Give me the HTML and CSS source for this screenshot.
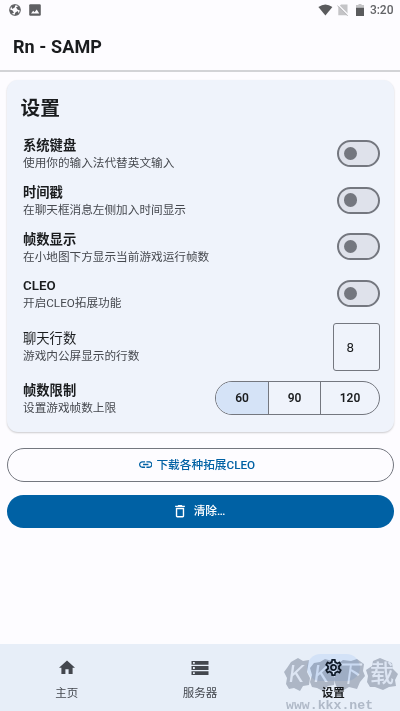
FILE: index.html
```html
<!DOCTYPE html>
<html lang="zh-CN">
<head>
<meta charset="utf-8">
<title>Rn - SAMP</title>
<link rel="stylesheet" href="styles.css">
</head>
<body>
<div class="screen">
  <div class="status">
    <svg class="s-app" viewBox="0 0 12 12"><circle cx="6" cy="6" r="5.300" fill="none" stroke="#77787b" stroke-width="1.200"/><g fill="#5f6063"><path d="M2 1.800 6.500.4 5.800 3.300 3.300 5z"/><path d="M10.200 2 11.600 6.500 8.700 5.800 7 3.300z"/><path d="M10 10.200 5.500 11.600 6.200 8.700 8.700 7z"/><path d="M1.800 10 .4 5.500 3.300 6.200 5 8.700z"/></g></svg>
    <svg class="s-img" viewBox="0 0 12 12"><rect x=".2" y=".2" width="11.600" height="11.600" rx="1.200" fill="#5f6063"/><path d="M2 9.500 4.200 6.700 5.600 8.300 7.700 5.600 10.300 9.500z" fill="#fdfcff"/></svg>
    <span class="grow"></span>
    <svg class="s-wifi" viewBox="0 0 15 12"><path d="M.4 3Q7.300-2 14.400 3L7.400 11.600z" fill="#5a5b5d"/></svg>
    <svg class="s-sim" viewBox="0 0 12 12"><path d="M4 .6H10.500V11.300H1.300V3.300z" fill="#c4c4c7"/><path d="M.8.400 12 11.600" stroke="#fdfcff" stroke-width="1.200"/><path d="M.3 1.500 10.700 11.900" stroke="#b8b8bb" stroke-width="1"/></svg>
    <svg class="s-bat" viewBox="0 0 8 12"><path d="M2.500 0h3v1H8v4H0V1h2.500z" fill="#c4c4c6"/><path d="M0 3.800h8V12H0z" fill="#5a5b5d"/></svg>
    <span class="clock">3:20</span>
  </div>
  <header class="appbar">Rn - SAMP</header>

  <main class="content">
    <section class="card">
      <h2 class="heading">设置</h2>
      <div class="row"><div><div class="name">系统键盘</div><div class="desc">使用你的输入法代替英文输入</div></div><div class="switch"></div></div>
      <div class="row"><div><div class="name">时间戳</div><div class="desc">在聊天框消息左侧加入时间显示</div></div><div class="switch"></div></div>
      <div class="row"><div><div class="name">帧数显示</div><div class="desc">在小地图下方显示当前游戏运行帧数</div></div><div class="switch"></div></div>
      <div class="row"><div><div class="name latin">CLEO</div><div class="desc">开启CLEO拓展功能</div></div><div class="switch"></div></div>
      <div class="row row-lines"><div><div class="name regular">聊天行数</div><div class="desc">游戏内公屏显示的行数</div></div><div class="field">8</div></div>
      <div class="row row-limit"><div><div class="name">帧数限制</div><div class="desc">设置游戏帧数上限</div></div>
        <div class="segments"><span class="seg on">60</span><span class="seg">90</span><span class="seg last">120</span></div>
      </div>
    </section>

    <div class="btn outlined">
      <svg class="i-link" viewBox="2 7 20 10"><path fill="#0061a4" d="M3.900 12c0-1.710 1.390-3.100 3.100-3.100h4V7H7c-2.760 0-5 2.240-5 5s2.240 5 5 5h4v-1.900H7c-1.710 0-3.100-1.390-3.100-3.100zM8 13h8v-2H8v2zm9-6h-4v1.900h4c1.710 0 3.100 1.390 3.100 3.100s-1.390 3.100-3.100 3.100h-4V17h4c2.760 0 5-2.240 5-5s-2.240-5-5-5z"/></svg>
      <span>下载各种拓展CLEO</span>
    </div>
    <div class="btn filled">
      <svg class="i-trash" viewBox="5 3 14 18"><path fill="#fff" d="M6 19c0 1.100.9 2 2 2h8c1.100 0 2-.9 2-2V7H6v12zM8 9h8v10H8V9zm7.500-5l-1-1h-5l-1 1H5v2h14V4h-3.500z"/></svg>
      <span>清除…</span>
    </div>
  </main>

  <nav class="tabs">
    <div class="tab"><div class="pill"><svg class="i-home" viewBox="2 3 20 17"><path fill="#43474e" d="M10 20v-6h4v6h5v-8h3L12 3 2 12h3v8z"/></svg></div><span>主页</span></div>
    <div class="tab"><div class="pill"><svg class="i-dns" viewBox="0 0 18 14"><path fill="#43474e" fill-rule="evenodd" d="M.5 0h17v3.800H.5zM2 1h1.800v1.800H2zM.5 5.100h17v3.800H.5zM2 6.100h1.800v1.800H2zM.5 10.200h17V14H.5zM2 11.200h1.800V13H2z"/></svg></div><span>服务器</span></div>
    <div class="tab active"><div class="pill"><svg class="i-gear" viewBox="2 2 20 20"><path fill="#101c2b" d="M19.430 12.980c.04-.32.070-.64.070-.98 0-.34-.03-.66-.07-.98l2.110-1.650c.19-.15.24-.42.12-.64l-2-3.460c-.09-.16-.26-.25-.44-.25-.06 0-.12.010-.17.030l-2.490 1c-.52-.4-1.080-.73-1.690-.98l-.38-2.650C14.460 2.180 14.250 2 14 2h-4c-.25 0-.46.18-.49.420l-.38 2.650c-.61.250-1.170.590-1.690.980l-2.490-1c-.06-.02-.12-.03-.18-.03-.17 0-.34.090-.43.250l-2 3.460c-.13.220-.07.490.12.640l2.110 1.650c-.04.320-.07.650-.07.980s.03.660.070.980l-2.110 1.650c-.19.150-.24.420-.12.640l2 3.460c.09.160.26.250.44.250.06 0 .12-.01.170-.03l2.490-1c.52.400 1.080.730 1.690.980l.38 2.650c.03.240.24.420.49.420h4c.25 0 .46-.18.490-.42l.38-2.650c.61-.25 1.170-.59 1.690-.98l2.490 1c.06.020.12.030.18.030.17 0 .34-.09.430-.25l2-3.460c.12-.22.070-.49-.12-.64l-2.110-1.650zm-1.980-1.710c.04.310.050.520.050.730s-.02.430-.05.730l-.14 1.130.89.700 1.080.84-.7 1.210-1.270-.51-1.040-.42-.9.680c-.43.320-.84.560-1.250.730l-1.060.43-.16 1.130-.2 1.350h-1.400l-.35-2.480-1.060-.43c-.43-.18-.83-.41-1.230-.71l-.91-.7-1.060.43-1.270.51-.7-1.210 1.970-1.540-.14-1.130c-.03-.31-.05-.54-.05-.74s.02-.43.050-.73l.14-1.130-1.970-1.540.7-1.210 1.270.51 1.040.42.900-.68c.43-.32.840-.56 1.250-.73l1.060-.43.350-2.480h1.390l.35 2.480 1.060.43c.43.180.83.410 1.230.71l.91.700 1.060-.43 1.270-.51.700 1.210-1.960 1.540.14 1.130zM12 8c-2.210 0-4 1.790-4 4s1.790 4 4 4 4-1.790 4-4-1.790-4-4-4zm0 6c-1.100 0-2-.9-2-2s.9-2 2-2 2 .9 2 2-.9 2-2 2z"/></svg></div><span>设置</span></div>
  </nav>

  <div class="mark">
    <svg class="mark-bg" viewBox="0 0 116 34"><g fill="#bfc3cb"><path d="M1 15 4 11 8 5 15 1 20 4 26 3 25 9 24 15 27 21 26 28 20 29 17 34 11 31 6 32 3 27 4 21z"/><path d="M27 11 31 6 37 5 42 2 49 4 51 10 49 15 52 21 51 28 45 29 40 34 34 31 29 30 27 25 29 18z"/><path d="M53 8 60 3 68 4 74 2 81 7 80 14 82 19 77 25 74 32 66 30 59 34 53 29 51 22 54 15z"/><path d="M83 13 89 9 90 4 97 1 104 4 109 6 110 12 115 17 112 23 113 29 106 30 100 33 92 30 87 30 84 25 85 19z"/></g></svg>
    <div class="mark-name"><span>K</span><span>K</span><span>下</span><span>载</span></div>
    <div class="mark-url">www.kkx.net</div>
  </div>
</div>
</body>
</html>
```
FILE: styles.css
```css
* { box-sizing: border-box; }
body { margin: 0; font-family: Roboto, "Noto Sans CJK SC", sans-serif; background: #fdfcff; color: #1a1c1e; }
.screen { position: relative; width: 400px; height: 711px; overflow: hidden; display: flex; flex-direction: column; }
svg { display: block; flex: none; }

.status { height: 20px; display: flex; align-items: center; padding: 0 6.500px 0 9px; }
.grow { flex: 1; }
.s-app { width: 12px; height: 12px; }
.s-img { width: 12px; height: 12px; margin-left: 8px; }
.s-wifi { width: 15px; height: 12px; margin-right: 4px; }
.s-sim { width: 12px; height: 12px; margin-right: 7px; }
.s-bat { width: 8px; height: 12px; margin-right: 6px; }
.clock { font-size: 12px; line-height: 21px; font-weight: 500; color: #626366; }

.appbar { height: 52px; flex: none; padding-left: 13px; font-size: 18px; font-weight: 700; line-height: 53px; border-bottom: 2px solid #d2d3d6; letter-spacing: .08px; }

.content { flex: 1; padding: 7.500px 6.500px 0; }
.card { height: 352px; background: #eff3fb; border-radius: 11px; padding: 13px 13.500px 0 16.500px; box-shadow: 0 1px 2px rgba(0,0,0,.2); }
.heading { margin: 0 0 0 -2.500px; font-size: 19.700px; font-weight: 700; line-height: 31px; height: 37.500px; }
.row { height: 46.700px; display: flex; align-items: center; justify-content: space-between; }
.name { font-size: 13.300px; line-height: 18px; padding-top: 2px; font-weight: 700; }
.name.latin { font-weight: 600; }
.name.regular { font-weight: 400; padding: 0; }
.desc { font-size: 11.650px; line-height: 16px; color: #46494f; }
.switch { width: 43.500px; height: 27px; border: 2px solid #74777f; border-radius: 14px; background: #dfe2eb; display: flex; align-items: center; padding-left: 5px; }
.switch::before { content: ""; width: 13.500px; height: 13.500px; border-radius: 50%; background: #74777f; }
.row-lines { height: 61px; padding-bottom: 1.500px; }
.field { width: 47px; height: 48px; border: 1.500px solid #74777f; border-radius: 3px; padding-left: 12.500px; font-size: 13.300px; line-height: 48px; }
.row-limit { height: 41px; }
.segments { width: 165px; height: 34px; display: flex; border: 1px solid #74777f; border-radius: 17px; overflow: hidden; font-size: 12px; font-weight: 600; }
.seg { width: 52px; text-align: center; line-height: 33px; border-right: 1px solid #74777f; }
.seg.on { background: #d5e3f7; width: 53px; }
.seg.last { flex: 1; border-right: 0; }

.btn { height: 33.500px; border-radius: 17px; display: flex; align-items: center; justify-content: center; font-size: 11.700px; font-weight: 500; line-height: 34px; }
.outlined { margin-top: 16.500px; border: 1px solid #74777f; color: #0061a4; padding-right: 6px; }
.filled { margin-top: 13px; background: #0061a4; color: #fff; }
.i-link { width: 13.500px; height: 7px; margin-right: 4px; }
.i-trash { width: 10px; height: 12.500px; margin-right: 9px; }

.tabs { position: relative; z-index: 0; height: 67px; flex: none; background: #e7eef8; display: flex; }
.tab { flex: 1; display: flex; flex-direction: column; align-items: center; padding-top: 10px; font-size: 11.500px; line-height: 18px; color: #43474e; }
.pill { width: 53px; height: 27px; border-radius: 14px; display: flex; align-items: center; justify-content: center; margin-bottom: 3px; }
.active { color: #1a1c1e; font-weight: 700; }
.active .pill { background: #d3e2f7; }
.i-home { width: 16px; height: 14.500px; }
.i-dns { width: 18px; height: 14px; }
.i-gear { width: 17px; height: 17px; }

/* multiply keeps the tab icon and label dark under the mark */
.mark { position: absolute; left: 283px; top: 657px; width: 116px; height: 54px; mix-blend-mode: multiply; }
.mark-bg { width: 116px; height: 34px; }
.mark-name { position: absolute; left: 1px; top: 3px; display: flex; font-size: 24px; line-height: 28px; color: #f4f6fa; }
.mark-name span { width: 25px; text-align: center; transform: skewX(-8deg); }
.mark-name span:nth-child(3) { width: 32px; }
.mark-name span:last-child { width: 32px; font-weight: 500; transform: none; }
.mark-url { position: absolute; left: 3px; top: 42.500px; font-family: "Liberation Mono", monospace; font-weight: 700; font-size: 13.200px; line-height: 12px; color: #c3c7ce; }
```
